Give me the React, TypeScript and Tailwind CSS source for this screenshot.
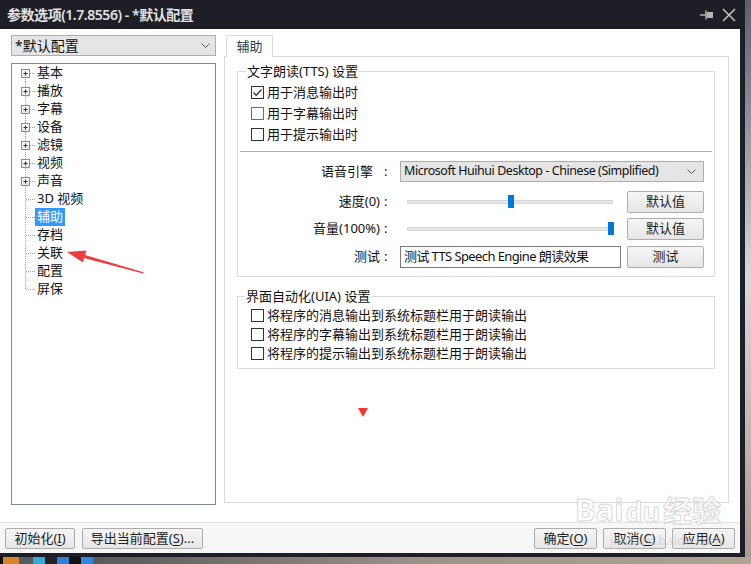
import React from "react";

const font = "font-['Noto_Sans','Noto_Sans_CJK_SC',sans-serif]";

const tree = [
  { label: "基本", plus: true },
  { label: "播放", plus: true },
  { label: "字幕", plus: true },
  { label: "设备", plus: true },
  { label: "滤镜", plus: true },
  { label: "视频", plus: true },
  { label: "声音", plus: true },
  { label: "3D 视频" },
  { label: "辅助", selected: true },
  { label: "存档" },
  { label: "关联" },
  { label: "配置" },
  { label: "屏保" },
];

function Chevron() {
  return (
    <svg width="9" height="5" viewBox="0 0 9 5" className="shrink-0">
      <polyline points="0.5,0.5 4.5,4.5 8.5,0.5" fill="none" stroke="#555" strokeWidth="1" />
    </svg>
  );
}

function TreeLines({ first, last, plus }: { first: boolean; last: boolean; plus?: boolean }) {
  return (
    <svg width="23" height="18" viewBox="0 0 23 18" className="shrink-0">
      <line x1="13.5" y1={first ? 9 : 0} x2="13.5" y2={last ? 9.5 : 18} stroke="#a0a0a0" strokeDasharray="1 1" />
      <line x1="14" y1="9.5" x2="23" y2="9.5" stroke="#a0a0a0" strokeDasharray="1 1" />
      {plus && (
        <>
          <defs>
            <linearGradient id="pb" x1="0" y1="0" x2="0" y2="1">
              <stop offset="0" stopColor="#ffffff" />
              <stop offset="1" stopColor="#e3e3e3" />
            </linearGradient>
          </defs>
          <rect x="9.5" y="5.5" width="8" height="8" fill="url(#pb)" stroke="#8e8f8f" />
          <line x1="11.5" y1="9.5" x2="15.5" y2="9.5" stroke="#1e395b" />
          <line x1="13.5" y1="7.5" x2="13.5" y2="11.5" stroke="#1e395b" />
        </>
      )}
    </svg>
  );
}

function CheckBox({ checked, hover, label, h }: { checked?: boolean; hover?: boolean; label: string; h: string }) {
  return (
    <div className={`flex items-center ${h}`}>
      <div
        className={`w-[13px] h-[13px] border bg-white flex items-center justify-center shrink-0 ${
          hover ? "border-[#1a7fe0]" : "border-[#333333]"
        }`}
      >
        {checked && (
          <svg width="11" height="11" viewBox="0 0 11 11">
            <polyline points="1.5,5.5 4.2,8.2 9.5,2.5" fill="none" stroke="#333" strokeWidth="1.3" />
          </svg>
        )}
      </div>
      <span className="ml-[3px] text-[13px] text-[#111]">{label}</span>
    </div>
  );
}

function Btn({ children, className = "" }: { children: React.ReactNode; className?: string }) {
  return (
    <div
      className={`flex items-center justify-center border border-[#adadad] bg-linear-to-b from-[#f6f6f6] to-[#e6e6e6] rounded-[2px] text-[13px] text-[#222] ${className}`}
    >
      {children}
    </div>
  );
}

function Label({ text, extra = "" }: { text: string; extra?: string }) {
  return (
    <div className="w-[152px] flex items-center justify-end text-[13px] text-[#111] shrink-0">
      <span className={extra}>{text}</span>
      <span className="w-[10px] pl-[4px]">:</span>
    </div>
  );
}

function Slider({ value }: { value: number }) {
  // track 206px wide, thumb 6px
  const left = Math.round(value * 200);
  return (
    <div className="w-[221px] h-[22px] flex items-center pl-[7px] shrink-0">
      <div className="relative w-[206px] h-[4px] bg-[#e7e7e7] border border-[#d6d6d6]">
        <div className="absolute top-[-6px] w-[6px] h-[13px] bg-[#0078d7]" style={{ left }} />
      </div>
    </div>
  );
}

function Ul({ c }: { c: string }) {
  return <span className="underline underline-offset-2">{c}</span>;
}

export default function App() {
  return (
    <div className={`relative w-[751px] h-[564px] overflow-hidden bg-[#b8b2aa] flex flex-col ${font}`}>
      <div className="flex">
        {/* Window */}
        <div className="w-[745px] h-[557px] bg-[#1e1f26] flex flex-col shrink-0">
          {/* Title bar */}
          <div className="h-[29px] flex items-center justify-between pl-[7px] pr-[9px] shrink-0">
            <span className="text-[14px] font-semibold text-[#e2e2e2] tracking-[-0.45px]">参数选项(1.7.8556) - *默认配置</span>
            <div className="flex items-center gap-[9px]">
              <svg width="13" height="10" viewBox="0 0 13 10">
                <line x1="0" y1="5" x2="6" y2="5" stroke="#b5b5b5" strokeWidth="1.5" />
                <line x1="6" y1="0.5" x2="6" y2="9.5" stroke="#b5b5b5" strokeWidth="1.5" />
                <rect x="7" y="2" width="6" height="6" fill="#b5b5b5" />
              </svg>
              <svg width="14" height="14" viewBox="0 0 14 14">
                <path d="M1 1 L13 13 M13 1 L1 13" stroke="#c4c4c4" strokeWidth="1.5" />
              </svg>
            </div>
          </div>

          {/* Body */}
          <div className="flex-1 flex flex-col bg-white mr-[5px] mb-[4px]">
            <div className="h-[493px] flex pt-[6px] shrink-0">
              {/* Left column */}
              <div className="ml-[11px] w-[205px] flex flex-col shrink-0">
                <div className="h-[21px] flex items-center justify-between bg-[#e5e5e5] border border-[#adadad] pl-[3px] pr-[5px]">
                  <span className="text-[14px] text-[#111]">*默认配置</span>
                  <Chevron />
                </div>
                <div className="mt-[7px] h-[442px] border border-[#828790] bg-white flex flex-col">
                  {tree.map((t, i) => (
                    <div key={t.label} className="h-[18px] flex items-center shrink-0">
                      <TreeLines first={i === 0} last={i === tree.length - 1} plus={t.plus} />
                      <span
                        className={`px-[2px] h-[18px] flex items-center text-[13px] ${
                          t.selected ? "bg-[#3399ff] text-white" : "text-[#111]"
                        }`}
                      >
                        {t.label}
                      </span>
                    </div>
                  ))}
                </div>
              </div>

              {/* Right column */}
              <div className="ml-[8px] w-[505px] flex flex-col shrink-0">
                <div className="h-[21px] flex items-end shrink-0">
                  <div className="ml-[2px] w-[47px] h-[22px] -mb-px relative z-10 bg-white border border-b-0 border-[#d9d9d9] flex items-center justify-center text-[13px] text-[#2a3a55]">
                    辅助
                  </div>
                </div>
                <div className="h-[447px] border border-[#d9d9d9] bg-white flex flex-col">
                  {/* TTS group */}
                  <fieldset className="ml-[12px] mt-[6px] w-[478px] border border-[#dcdcdc] pb-[8px]">
                    <legend className="ml-[8px] px-[1px] text-[13px] leading-[17px] text-[#111]">文字朗读(TTS) 设置</legend>
                    <div className="pl-[13px] pt-[2px] flex flex-col">
                      <CheckBox checked label="用于消息输出时" h="h-[21px]" />
                      <CheckBox hover label="用于字幕输出时" h="h-[21px]" />
                      <CheckBox label="用于提示输出时" h="h-[21px]" />
                    </div>
                    <div className="mx-[2px] mt-[6px] h-px bg-[#b0b0b0]" />
                    <div className="mt-[9px] flex items-center">
                      <Label text="语音引擎" extra="pr-[7px]" />
                      <div className="ml-[10px] w-[304px] h-[21px] flex items-center justify-between bg-[#e5e5e5] border border-[#adadad] pl-[3px] pr-[7px]">
                        <span className="text-[12.5px] text-[#111] tracking-[-0.45px]">Microsoft Huihui Desktop - Chinese (Simplified)</span>
                        <Chevron />
                      </div>
                    </div>
                    <div className="mt-[9px] flex items-center">
                      <Label text="速度(0)" />
                      <div className="ml-[10px] flex items-center">
                        <Slider value={0.5} />
                        <Btn className="ml-[6px] w-[77px] h-[22px]">默认值</Btn>
                      </div>
                    </div>
                    <div className="mt-[5px] flex items-center">
                      <Label text="音量(100%)" />
                      <div className="ml-[10px] flex items-center">
                        <Slider value={1} />
                        <Btn className="ml-[6px] w-[77px] h-[22px]">默认值</Btn>
                      </div>
                    </div>
                    <div className="mt-[6px] flex items-center">
                      <Label text="测试" />
                      <div className="ml-[10px] flex items-center">
                        <div className="w-[221px] h-[22px] border border-[#7a7a7a] bg-white flex items-center pl-[3px] text-[13px] text-[#111] tracking-[-0.6px]">
                          测试 TTS Speech Engine 朗读效果
                        </div>
                        <Btn className="ml-[6px] w-[77px] h-[22px]">测试</Btn>
                      </div>
                    </div>
                  </fieldset>

                  {/* UIA group */}
                  <fieldset className="ml-[12px] mt-[11px] w-[478px] border border-[#dcdcdc] pb-[5px]">
                    <legend className="ml-[7px] px-[1px] text-[13px] leading-[17px] text-[#111]">界面自动化(UIA) 设置</legend>
                    <div className="pl-[13px] pt-[1px] flex flex-col">
                      <CheckBox label="将程序的消息输出到系统标题栏用于朗读输出" h="h-[19px]" />
                      <CheckBox label="将程序的字幕输出到系统标题栏用于朗读输出" h="h-[19px]" />
                      <CheckBox label="将程序的提示输出到系统标题栏用于朗读输出" h="h-[19px]" />
                    </div>
                  </fieldset>
                </div>
              </div>
            </div>

            {/* Bottom buttons */}
            <div className="flex-1 border-t border-[#e3e3e3] bg-[#f7f7f7] flex items-start pt-[5px] px-[5px]">
              <Btn className="w-[70px] h-[21px]">初始化(<Ul c="I" />)</Btn>
              <Btn className="ml-[7px] w-[121px] h-[21px]">导出当前配置(<Ul c="S" />)...</Btn>
              <div className="flex-1" />
              <Btn className="w-[63px] h-[21px]">确定(<Ul c="O" />)</Btn>
              <Btn className="ml-[6px] w-[63px] h-[21px]">取消(<Ul c="C" />)</Btn>
              <Btn className="ml-[6px] w-[63px] h-[21px]">应用(<Ul c="A" />)</Btn>
            </div>
          </div>
        </div>
        {/* desktop strip on the right */}
        <div className="w-[6px] h-[557px] bg-linear-to-b from-[#5a6070] via-[#d9d9d9] to-[#a69c90]" />
      </div>
      {/* desktop strip at the bottom */}
      <div className="flex-1 flex">
        <div className="w-[3px] bg-[#111]" />
        <div className="w-[16px] bg-[#d9822b]" />
        <div className="w-[14px] bg-[#555a60]" />
        <div className="w-[12px] bg-[#3aa8d8]" />
        <div className="w-[12px] bg-[#222]" />
        <div className="w-[12px] bg-[#2f7fd5]" />
        <div className="w-[12px] bg-[#111]" />
        <div className="w-[12px] bg-[#2f88e0]" />
        <div className="flex-1 bg-linear-to-r from-[#5a5a5a] via-[#9c9288] to-[#b0a492]" />
      </div>

      {/* Annotation: red arrow pointing at 关联 and a small marker */}
      <svg className="absolute left-0 top-0 pointer-events-none" width="751" height="564">
        <polygon
          points="67,252 86.5,250.5 85,255 143.5,272.3 143,273.6 84,258 83,262.5"
          fill="#ee3b3b"
        />
        <polygon points="358,408 368,408 363,417" fill="#ff3030" />
      </svg>

      {/* Baidu watermark */}
      <div className="absolute left-[575px] top-[494px] flex items-end pointer-events-none opacity-80">
        <span className="text-[31px] font-bold leading-none text-white [-webkit-text-stroke:1px_#cfcfcf]">Bai</span>
        <span className="text-[27px] font-bold leading-none text-white [-webkit-text-stroke:1px_#cfcfcf] ml-[2px]">du</span>
        <span className="text-[29px] font-bold leading-none text-white [-webkit-text-stroke:1px_#cfcfcf] ml-[3px]">经验</span>
      </div>
      <div className="absolute left-[610px] top-[531px] text-[13px] text-[#c8c8c8] opacity-50 pointer-events-none">
        jingyan.baidu.com
      </div>
    </div>
  );
}
